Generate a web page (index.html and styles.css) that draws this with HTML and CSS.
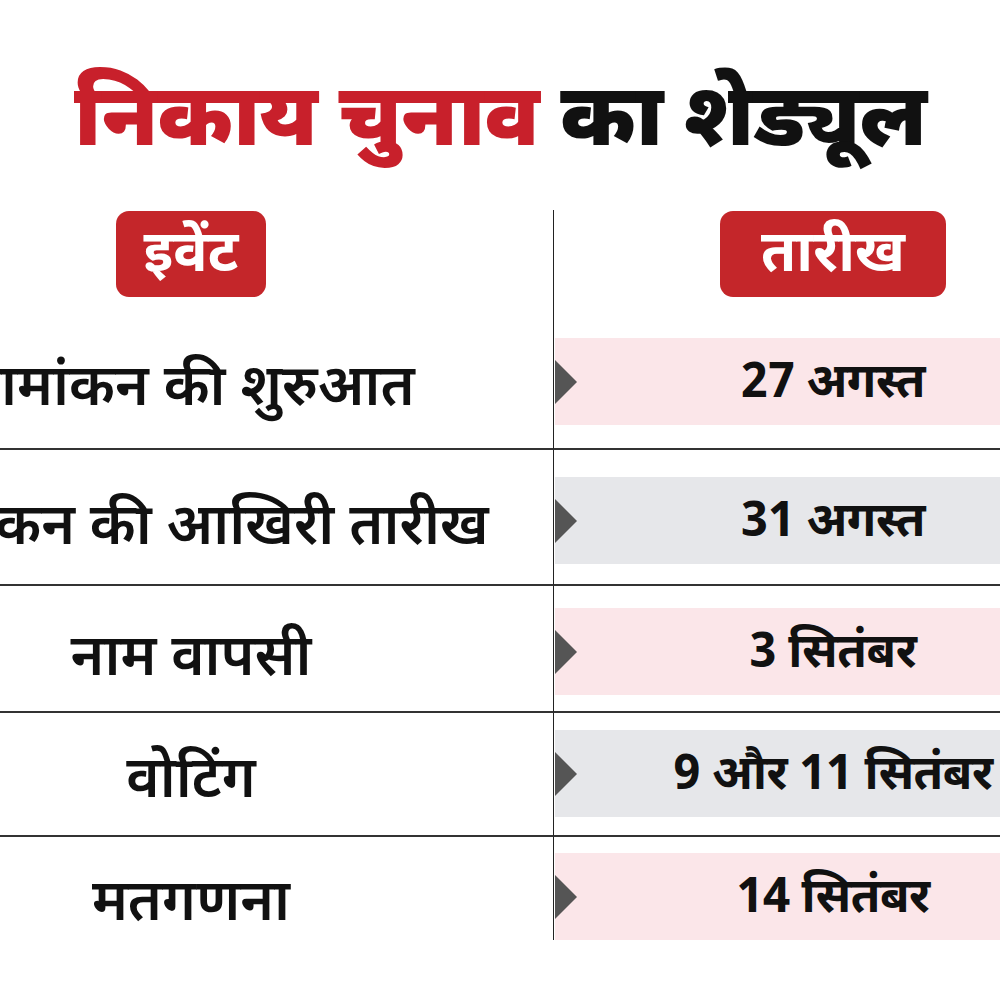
FILE: index.html
```html
<!DOCTYPE html>
<html lang="hi">
<head>
<meta charset="utf-8">
<title>निकाय चुनाव का शेड्यूल</title>
<link rel="stylesheet" href="styles.css">
</head>
<body>
<div class="page">
  <h1 class="title"><span class="red">निकाय चुनाव</span>&nbsp;का शेड्यूल</h1>
  <div class="table">
    <div class="cell left head"><span class="badge badge-event">इवेंट</span></div>
    <div class="cell right head"><span class="badge badge-date">तारीख</span></div>

    <div class="cell left r1 line"><span class="ev">नामांकन की शुरुआत</span></div>
    <div class="cell right r1 line"><div class="date pink">27 अगस्त</div></div>

    <div class="cell left r2 line"><span class="ev">नामांकन की आखिरी तारीख</span></div>
    <div class="cell right r2 line"><div class="date grey">31 अगस्त</div></div>

    <div class="cell left r3 line"><span class="ev">नाम वापसी</span></div>
    <div class="cell right r3 line"><div class="date pink">3 सितंबर</div></div>

    <div class="cell left r4 line"><span class="ev">वोटिंग</span></div>
    <div class="cell right r4 line"><div class="date grey">9 और 11 सितंबर</div></div>

    <div class="cell left r5"><span class="ev">मतगणना</span></div>
    <div class="cell right r5"><div class="date pink">14 सितंबर</div></div>
  </div>
</div>
</body>
</html>
```

FILE: styles.css
```css
html, body {
  margin: 0;
  padding: 0;
  background: #ffffff;
}
body {
  font-family: "Noto Sans Devanagari", "Noto Sans", sans-serif;
  color: #111111;
  overflow: hidden;
  width: 1000px;
  height: 1000px;
}
.page {
  width: 1000px;
  height: 1000px;
  overflow: hidden;
  padding-top: 68px;
  box-sizing: border-box;
}
.title {
  margin: 0;
  height: 110px;
  display: flex;
  align-items: center;
  justify-content: center;
  font-size: 87px;
  font-weight: 900;
  line-height: 1;
  color: #111111;
  white-space: nowrap;
  letter-spacing: -1px;
}
.red {
  color: #c8202b;
}
.table {
  margin-top: 32px;
  display: grid;
  grid-template-columns: 553px 558px;
  width: 1111px;
}
.cell {
  display: flex;
  align-items: flex-start;
  justify-content: center;
  box-sizing: border-box;
}
.left {
  padding-right: 171px;
  white-space: nowrap;
}
.right {
  border-left: 1.5px solid #222222;
  padding-left: 1px;
}
.line {
  border-bottom: 2px solid #333333;
}
.head {
  height: 128px;
  padding-top: 1px;
}
.badge {
  display: flex;
  align-items: center;
  justify-content: center;
  height: 86px;
  background: #c4262a;
  color: #ffffff;
  border-radius: 13px;
  font-size: 57px;
  font-weight: 700;
  line-height: 1;
  padding-top: 6px;
  box-sizing: border-box;
}
.badge-event {
  width: 150px;
}
.badge-date {
  width: 226px;
}
.ev {
  display: flex;
  align-items: center;
  height: 87px;
  font-size: 57px;
  font-weight: 600;
  line-height: 1;
  color: #111111;
  position: relative;
  top: 10px;
}
.date {
  position: relative;
  width: 100%;
  height: 87px;
  display: flex;
  align-items: center;
  justify-content: center;
  font-size: 48px;
  font-weight: 700;
  line-height: 1;
  padding-top: 8px;
  box-sizing: border-box;
  color: #111111;
  letter-spacing: -0.5px;
}
.date::before {
  content: "";
  position: absolute;
  left: 0;
  top: 50%;
  margin-top: -22px;
  border-top: 22px solid transparent;
  border-bottom: 22px solid transparent;
  border-left: 22px solid #555555;
}
.pink {
  background: #fbe6e9;
}
.grey {
  background: #e6e7ea;
}
.r1 { height: 112px; }
.r2 { height: 136px; padding-top: 27px; }
.r3 { height: 127px; padding-top: 22px; }
.r4 { height: 124px; padding-top: 17px; }
.r5 { height: 103px; padding-top: 16px; }
```
